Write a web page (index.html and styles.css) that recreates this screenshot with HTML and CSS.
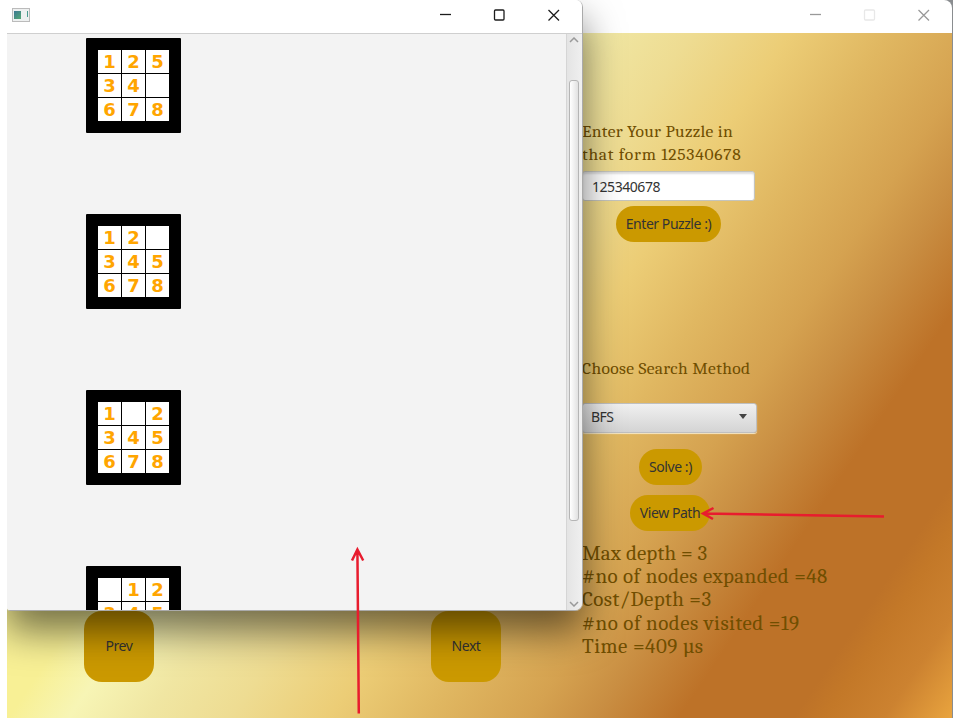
FILE: index.html
```html
<!DOCTYPE html>
<html lang="en">
<head>
<meta charset="utf-8">
<title>8 Puzzle</title>
<link rel="stylesheet" href="styles.css">
</head>
<body>
<main class="desktop">
  <section class="window main-window">
    <header class="titlebar inactive">
      <svg class="controls" width="128" height="14" viewBox="0 0 128 14"><path class="min" d="M0 7.5h11"/><rect class="max" x="54.5" y="3" width="10" height="10" rx="1"/><path class="close" d="M108.500 3l10.500 10.500M119 3l-10.500 10.500"/></svg>
    </header>
    <div class="workspace">
      <div class="stage">
        <button class="nav">Prev</button>
        <button class="nav">Next</button>
      </div>
      <div class="panel">
        <p class="label prompt"><span class="l1">Enter Your Puzzle in</span><br><span class="l2">that form 125340678</span></p>
        <input class="field" value="125340678" aria-label="Puzzle">
        <button class="pill enter">Enter Puzzle :)</button>
        <p class="label method">Choose Search Method</p>
        <div class="combo">BFS<span class="caret"></span></div>
        <button class="pill solve">Solve :)</button>
        <button class="pill view">View Path</button>
        <div class="stats">
          <div class="s1">Max depth = 3</div>
          <div class="s2">#no of nodes expanded =48</div>
          <div class="s3">Cost/Depth =3</div>
          <div class="s4">#no of nodes visited =19</div>
          <div class="s5">Time =409 µs</div>
        </div>
      </div>
    </div>
  </section>

  <section class="window path-window">
    <header class="titlebar">
      <span class="app-icon"><i></i><b></b></span>
      <svg class="controls" width="128" height="14" viewBox="0 0 128 14"><path d="M0 7.500h11"/><rect x="54.5" y="3" width="9.500" height="10" rx="1"/><path d="M108.500 3l10.500 10.500M119 3l-10.500 10.500"/></svg>
    </header>
    <div class="scrollpane">
      <div class="boards">
        <div class="board"><span>1</span><span>2</span><span>5</span><span>3</span><span>4</span><span></span><span>6</span><span>7</span><span>8</span></div>
        <div class="board"><span>1</span><span>2</span><span></span><span>3</span><span>4</span><span>5</span><span>6</span><span>7</span><span>8</span></div>
        <div class="board"><span>1</span><span></span><span>2</span><span>3</span><span>4</span><span>5</span><span>6</span><span>7</span><span>8</span></div>
        <div class="board"><span></span><span>1</span><span>2</span><span>3</span><span>4</span><span>5</span></div>
      </div>
      <div class="scrollbar">
        <svg width="10" height="6" viewBox="0 0 10 6"><path d="M1 5l4-4 4 4"/></svg>
        <div class="thumb"></div>
        <svg class="down" width="10" height="6" viewBox="0 0 10 6"><path d="M1 1l4 4 4-4"/></svg>
      </div>
    </div>
  </section>
  <svg class="arrows" width="953" height="718" viewBox="0 0 953 718">
    <path d="M884 516.500L703 513.500M713.500 508L703 513.500l10 5.500"/>
    <path d="M358.800 713.500L357.400 549.500M352 560.500l5.400-11 5.800 11"/>
  </svg>
</main>
</body>
</html>
```
FILE: styles.css
```css
* { box-sizing: border-box; }
body { margin: 0; font-family: "Noto Sans", "Open Sans", sans-serif; }
.desktop {
  position: relative; width: 953px; height: 718px; overflow: hidden;
  background: linear-gradient(90deg, #fff 900px, #8a8d90 900px);
}
.window { position: absolute; top: 0; display: flex; flex-direction: column; }
.titlebar { height: 33px; background: #fff; display: flex; flex: none; }
.controls { margin: 7px 0 0 auto; fill: none; stroke: #1c1c1c; stroke-width: 1.3; }

.main-window { left: 7px; width: 944.5px; height: 718px; }
.inactive { border-top-right-radius: 8px; }
.inactive .controls { margin-right: 13.500px; stroke: #999; }
.inactive .max { stroke: #e8e8e8; }
.workspace {
  flex: 1; display: flex;
  background: linear-gradient(124deg, #f8f095 384px, #f7f5b5 434px, #f0e6a2 499px, #eedc92 568px, #eccd76 650px, #e0b761 732px, #d5a250 816px, #c98e42 870px, #bd7228 940px, #bd7228 1035px, #c37828 1060px, #cc8230 1110px, #e8a33e 1165px);
}
.stage { width: 575px; padding: 577.500px 0 0 77px; display: flex; align-items: flex-start; gap: 277px; }
button, input { font: 14px "Noto Sans", "Open Sans", sans-serif; letter-spacing: -.45px; color: #333; border: 0; padding: 0; white-space: nowrap; }
.nav { width: 70px; height: 71px; padding-bottom: 1px; border-radius: 18px; background: #cb9900; flex: none; }
.panel { width: 369px; padding-top: 87px; display: flex; flex-direction: column; align-items: flex-start; }
p { margin: 0; }
.label, .stats { font-family: Cambria, "DejaVu Serif Condensed", "DejaVu Serif", serif; font-stretch: condensed; color: #704e00; white-space: nowrap; }
.label { font-size: 17.500px; line-height: 23px; letter-spacing: .34px; }
.l1 { letter-spacing: .3px; }
.l2 { letter-spacing: .740px; }
.field { width: 173px; height: 30px; margin-top: 5px; padding: 0 9px; background: #fff; border: 1px solid #c4c4bd; border-radius: 3px; box-shadow: inset 0 2px 2px #ddd; }
.pill { height: 36px; border-radius: 18px; background: #cb9900; }
.enter { width: 105px; margin: 4.500px 0 0 34px; }
.method { margin-top: 115px; }
.combo { width: 175px; height: 30px; margin-top: 23px; padding: 0 9px 2px 8px; display: flex; align-items: center; justify-content: space-between; font-size: 14px; letter-spacing: -.6px; color: #333; background: linear-gradient(#f0f0f0, #d4d4d4); border: 1px solid #bfbfbf; border-radius: 3px; box-shadow: 0 1px 1px #f5e8c8; }
.caret { border: 4.500px solid transparent; border-top: 5px solid #444; border-bottom: 0; }
.solve { width: 63px; margin: 16px 0 0 57px; }
.view { width: 80px; margin: 10px 0 0 48px; }
.stats { margin-top: 11.500px; font-size: 21px; line-height: 23.200px; }
.s1 { letter-spacing: .15px; }
.s2 { letter-spacing: .42px; }
.s3 { letter-spacing: .42px; }
.s4 { letter-spacing: .48px; }
.s5 { letter-spacing: .5px; }

.path-window { left: 7px; width: 575.500px; height: 611px; border-radius: 0 7px 8px 3px; overflow: hidden; border: solid #aaa; border-width: 0 1px 1px 0; }
.path-window { box-shadow: 0 20px 38px #0008; clip-path: inset(0 -70px -90px 0); }
.path-window .controls { margin-right: 13.500px; }
.app-icon { width: 18px; height: 14px; margin: 8px 0 0 5px; border: 1px solid #bbb; background: #eef0f0; display: flex; justify-content: space-between; padding: 2px 1px; }
.app-icon i { width: 7px; background: linear-gradient(135deg, #3c7893, #54a974); }
.app-icon b { width: 1.500px; height: 6px; background: #4b9c91; }
.scrollpane { flex: 1; min-height: 0; display: flex; background: #f3f3f3; border-top: 1px solid #cfcfcf; }
.boards { flex: 1; padding: 4.400px 0 0 79px; overflow: hidden; }
.board { width: 95px; height: 95px; margin-bottom: 81px; padding: 12px 12px 12px 12px; display: grid; grid-template: repeat(3, 23px) / repeat(3, 23px); gap: 1px; background: #000; border-radius: 1px; }
.board span { display: flex; align-items: center; justify-content: center; padding-top: 1px; background: #fff; color: #ffa500; font: bold 18px/20px "DejaVu Sans", Verdana, sans-serif; }
.scrollbar { width: 15.500px; border-left: 1px solid #d5d5d5; background: linear-gradient(90deg, #e4e4e4, #efefef); display: flex; flex-direction: column; align-items: center; padding: 3px 0; }
.scrollbar svg { flex: none; fill: none; stroke: #999; stroke-width: 1.5; }
.scrollbar .down { margin-top: auto; }
.thumb { width: 10px; height: 441px; margin-top: 37px; border: 1px solid #b5b5b5; border-radius: 3px; background: linear-gradient(90deg, #fff, #e1e1e1); }
.arrows { position: absolute; left: 0; top: 0; fill: none; stroke: #e81c2e; stroke-width: 2.500; pointer-events: none; }
```
